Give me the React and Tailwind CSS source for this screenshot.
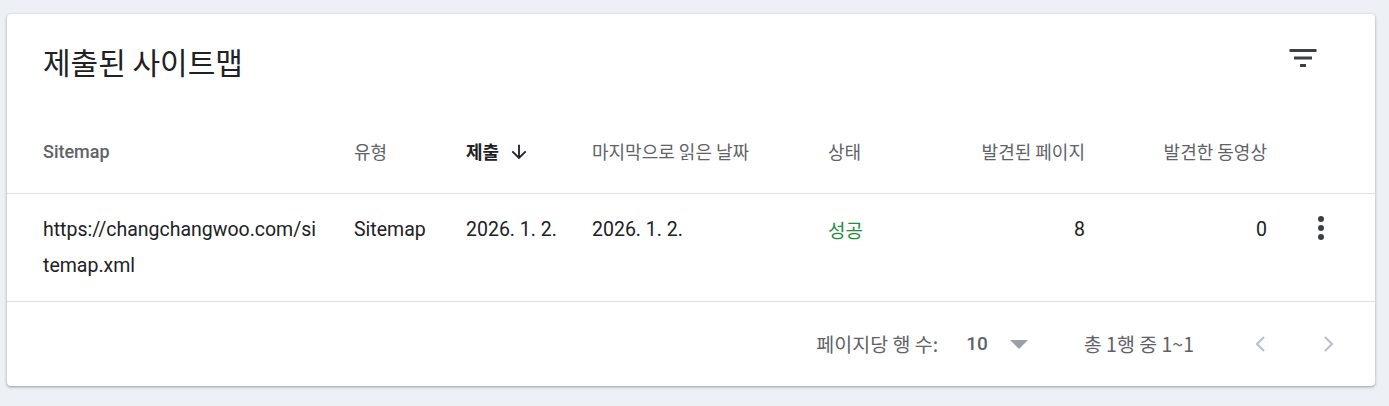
import React from "react";

const LATIN = { fontFamily: "Roboto, 'Noto Sans CJK KR', sans-serif" };
const KR = { fontFamily: "'Noto Sans CJK KR', Roboto, sans-serif" };

function FilterIcon() {
  return (
    <svg width="36" height="36" viewBox="0 0 24 24" fill="#3c4043">
      <path d="M10 18h4v-2h-4v2zM3 6v2h18V6H3zm3 7h12v-2H6v2z" />
    </svg>
  );
}

function ArrowDown() {
  return (
    <svg width="22" height="22" viewBox="0 0 24 24" fill="#202124">
      <path d="M20 12l-1.41-1.41L13 16.17V4h-2v12.17l-5.58-5.59L4 12l8 8 8-8z" />
    </svg>
  );
}

function MoreVert() {
  return (
    <svg width="36" height="36" viewBox="0 0 24 24" fill="#3c4043">
      <circle cx="12" cy="6" r="2" />
      <circle cx="12" cy="12" r="2" />
      <circle cx="12" cy="18" r="2" />
    </svg>
  );
}

function Chevron({ dir }) {
  return (
    <svg width="14" height="18" viewBox="0 0 14 18" fill="none">
      {dir === "left" ? (
        <polyline points="10,2 3,9 10,16" stroke="#bdc1c6" strokeWidth="2.2" />
      ) : (
        <polyline points="4,2 11,9 4,16" stroke="#bdc1c6" strokeWidth="2.2" />
      )}
    </svg>
  );
}

export default function App() {
  return (
    <div className="min-h-[406px] bg-[#edf1f6] pt-[14px] pb-[20px] pl-[7px] pr-[14px]">
      <div className="bg-white rounded-[4px] shadow-[0_1px_2px_rgba(60,64,67,0.3),0_1px_3px_1px_rgba(60,64,67,0.15)]">
        {/* Title */}
        <div className="h-[96px] flex items-center justify-between pl-[36px] pr-[54px]">
          <h1 className="text-[30px] text-[#202124] font-normal leading-none -mt-[2px]" style={KR}>
            제출된 사이트맵
          </h1>
          <div className="mb-[8px]">
            <FilterIcon />
          </div>
        </div>

        {/* Header row */}
        <div className="h-[84px] flex items-center pl-[36px] border-b border-[#e0e0e0] text-[#5f6368]">
          <div className="w-[311px] text-[18px] font-medium" style={LATIN}>Sitemap</div>
          <div className="w-[112px] text-[18px]" style={KR}>유형</div>
          <div className="w-[126px] flex items-center gap-[9px] text-[18px] font-bold text-[#202124]" style={KR}>
            <span>제출</span>
            <ArrowDown />
          </div>
          <div className="w-[236px] text-[18px]" style={KR}>마지막으로 읽은 날짜</div>
          <div className="w-[120px] text-[18px]" style={KR}>상태</div>
          <div className="w-[137px] text-right text-[18px]" style={KR}>발견된 페이지</div>
          <div className="w-[182px] text-right text-[18px]" style={KR}>발견한 동영상</div>
          <div className="flex-1" />
        </div>

        {/* Data row */}
        <div className="h-[108px] flex items-start pt-[18px] pl-[36px] border-b border-[#e0e0e0] text-[19.5px] leading-[36px] text-[#202124]" style={LATIN}>
          <div className="w-[311px]">
            https://changchangwoo.com/si
            <br />
            temap.xml
          </div>
          <div className="w-[112px]">Sitemap</div>
          <div className="w-[126px]">2026. 1. 2.</div>
          <div className="w-[236px]">2026. 1. 2.</div>
          <div className="w-[120px] text-[19px] text-[#1e8e3e]" style={KR}>성공</div>
          <div className="w-[137px] text-right">8</div>
          <div className="w-[182px] text-right">0</div>
          <div className="flex-1 flex justify-center -mt-[2px]">
            <MoreVert />
          </div>
        </div>

        {/* Footer */}
        <div className="h-[84px] flex items-center justify-end pr-[23px] text-[#5f6368]">
          <span className="text-[19.5px]" style={KR}>페이지당 행 수:</span>
          <span className="ml-[28px] text-[19px] font-medium text-[#5f6368]" style={LATIN}>10</span>
          <svg className="ml-[22px]" width="18" height="9" viewBox="0 0 18 9">
            <polygon points="0,0 18,0 9,9" fill="#9aa0a6" />
          </svg>
          <span className="ml-[56px] text-[19.5px]" style={KR}>총 1행 중 1~1</span>
          <div className="ml-[43px] w-[48px] h-[48px] flex items-center justify-center">
            <Chevron dir="left" />
          </div>
          <div className="ml-[19px] w-[48px] h-[48px] flex items-center justify-center">
            <Chevron dir="right" />
          </div>
        </div>
      </div>
    </div>
  );
}
